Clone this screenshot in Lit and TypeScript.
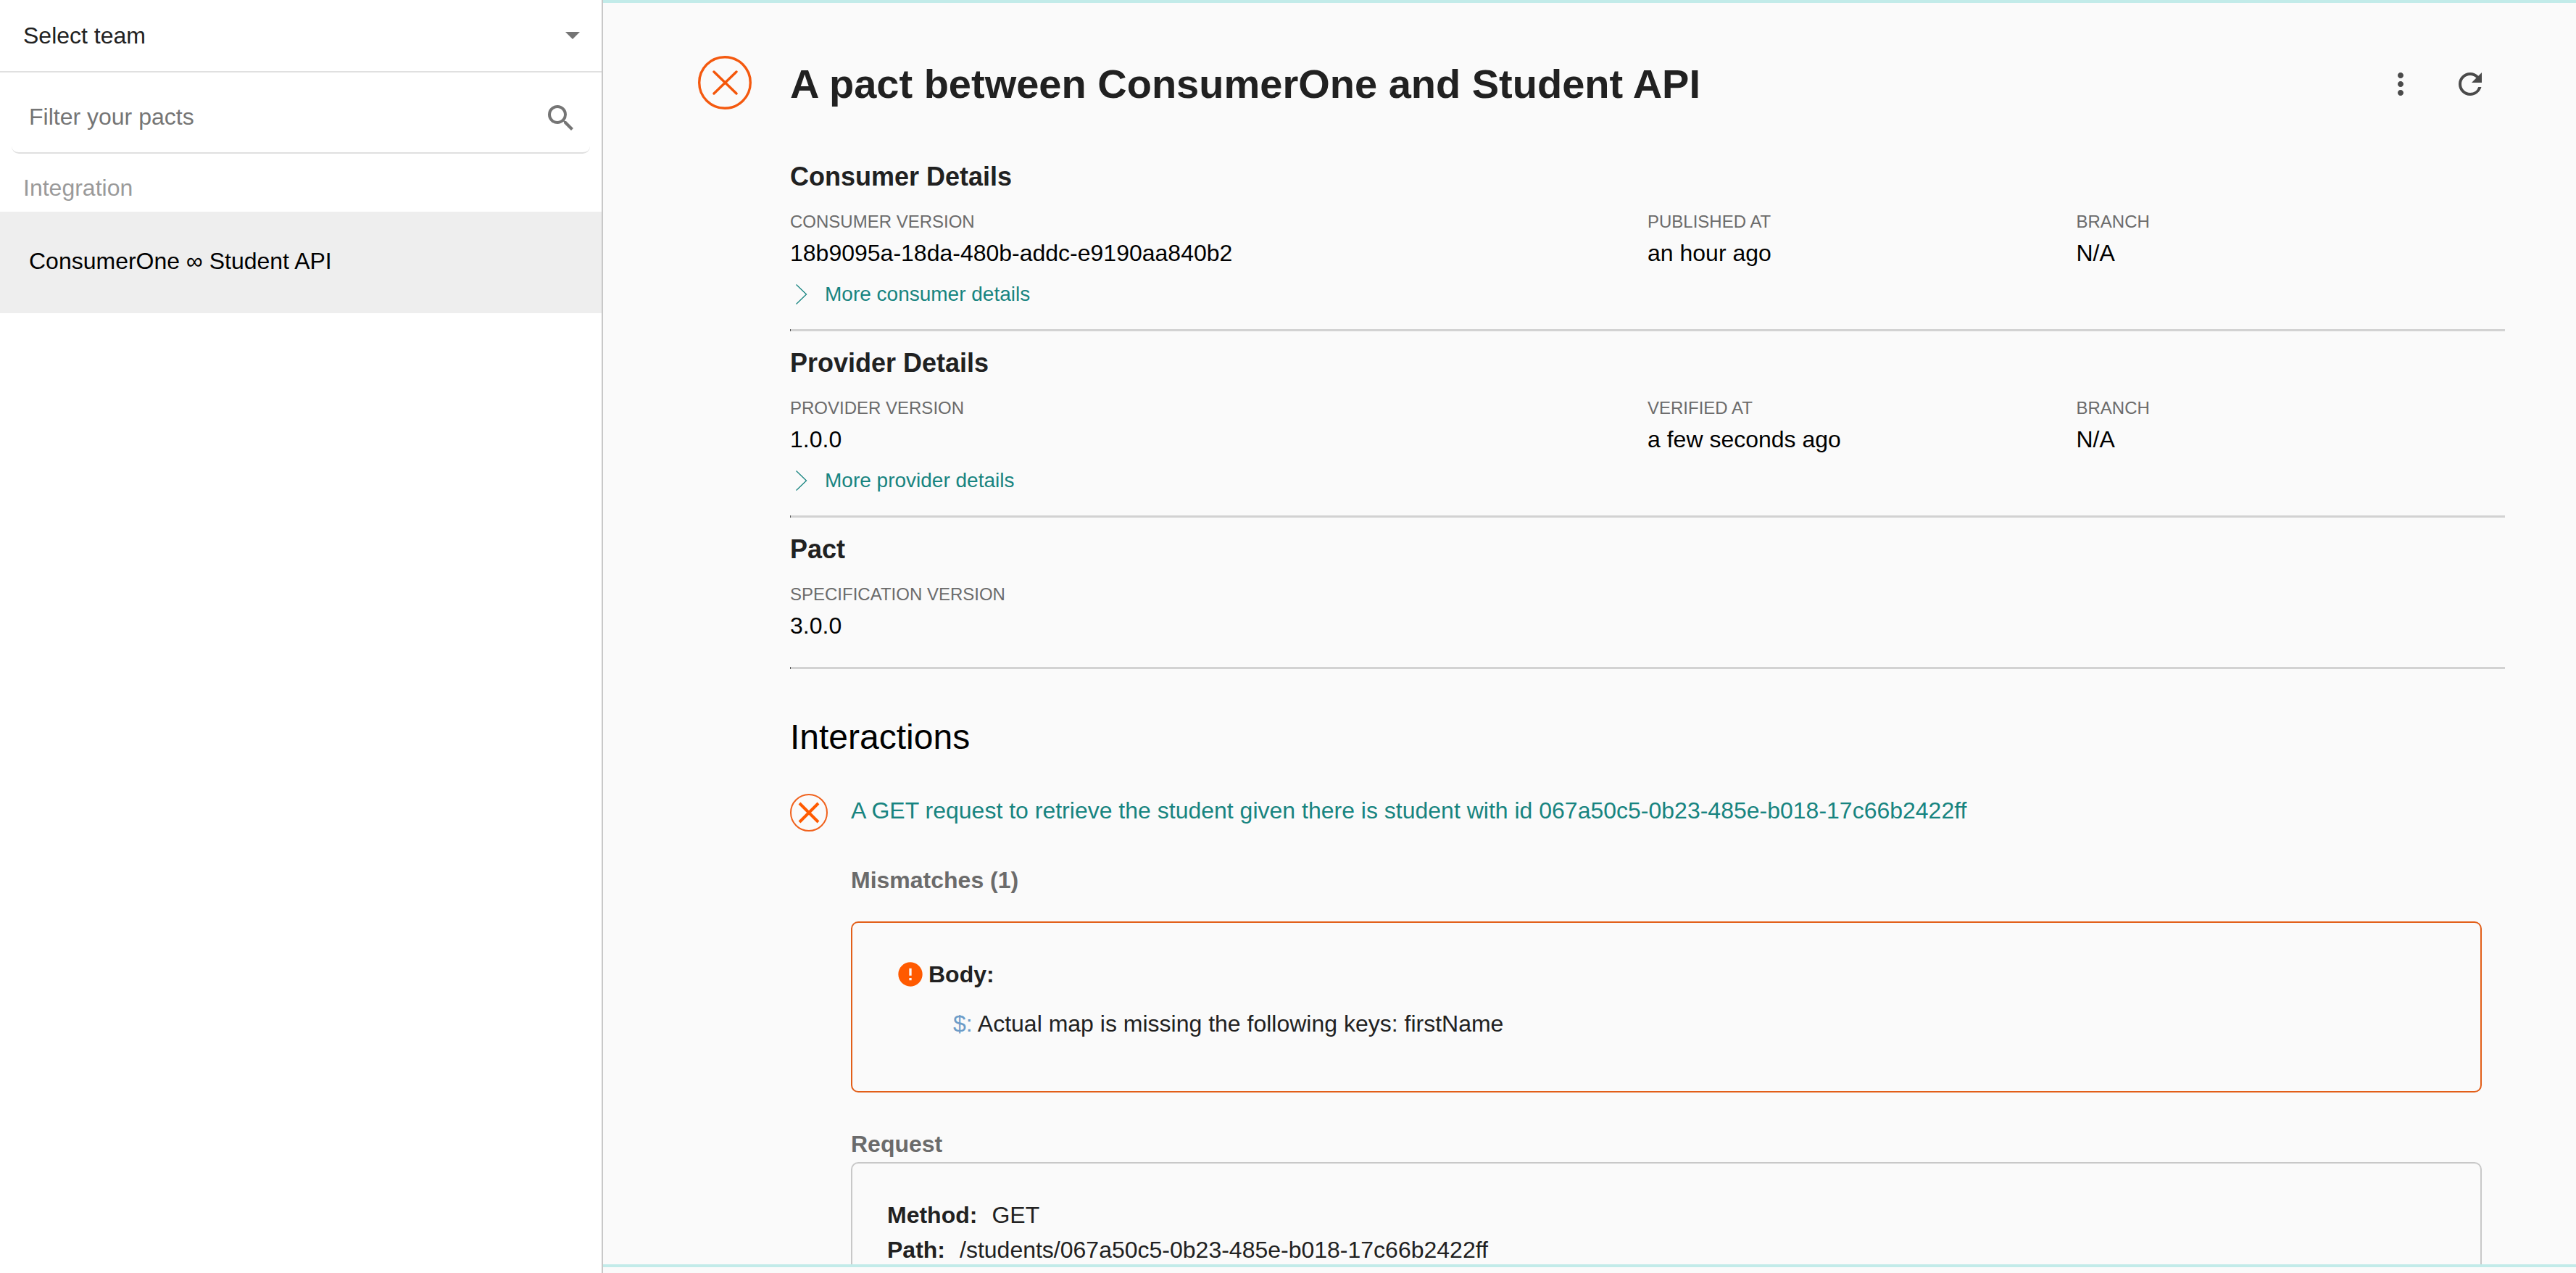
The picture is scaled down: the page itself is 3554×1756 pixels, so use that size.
import { LitElement, html, css, svg, nothing } from "lit";
import { customElement, property } from "lit/decorators.js";

interface Fact {
  label: string;
  value: string;
}

interface Section {
  title: string;
  facts: Fact[];
  more?: string;
}

const sections: Section[] = [
  {
    title: "Consumer Details",
    facts: [
      { label: "CONSUMER VERSION", value: "18b9095a-18da-480b-addc-e9190aa840b2" },
      { label: "PUBLISHED AT", value: "an hour ago" },
      { label: "BRANCH", value: "N/A" },
    ],
    more: "More consumer details",
  },
  {
    title: "Provider Details",
    facts: [
      { label: "PROVIDER VERSION", value: "1.0.0" },
      { label: "VERIFIED AT", value: "a few seconds ago" },
      { label: "BRANCH", value: "N/A" },
    ],
    more: "More provider details",
  },
  {
    title: "Pact",
    facts: [{ label: "SPECIFICATION VERSION", value: "3.0.0" }],
  },
];

const pacts = ["ConsumerOne ∞ Student API"];

/** Material-style glyph on a 24 unit grid. */
const glyph = (className: string, d: string) => html`
  <svg class=${className} viewBox="0 0 24 24" aria-hidden="true">${svg`<path fill="currentColor" d=${d} />`}</svg>
`;

const SEARCH =
  "M15.5 14h-.79l-.28-.27A6.471 6.471 0 0 0 16 9.5 6.5 6.5 0 1 0 9.5 16c1.61 0 3.09-.59 4.23-1.57l.27.28v.79l5 4.99L20.49 19l-4.99-5zm-6 0C7.01 14 5 11.99 5 9.5S7.01 5 9.5 5 14 7.01 14 9.5 11.99 14 9.5 14z";
const MORE =
  "M12 8c1.1 0 2-.9 2-2s-.9-2-2-2-2 .9-2 2 .9 2 2 2zm0 2c-1.1 0-2 .9-2 2s.9 2 2 2 2-.9 2-2-.9-2-2-2zm0 6c-1.1 0-2 .9-2 2s.9 2 2 2 2-.9 2-2-.9-2-2-2z";
const REFRESH =
  "M17.65 6.35A7.958 7.958 0 0 0 12 4c-4.42 0-7.99 3.58-7.99 8s3.57 8 7.99 8c3.73 0 6.84-2.55 7.73-6h-2.08A5.99 5.99 0 0 1 12 18c-3.31 0-6-2.69-6-6s2.69-6 6-6c1.66 0 3.14.69 4.22 1.78L13 11h7V4l-2.35 2.35z";
const ERROR =
  "M12 2C6.48 2 2 6.48 2 12s4.48 10 10 10 10-4.48 10-10S17.52 2 12 2zm1 15h-2v-2h2v2zm0-4h-2V7h2v6z";

@customElement("pact-sidebar")
export class PactSidebar extends LitElement {
  static styles = css`
    :host {
      display: block;
      box-sizing: border-box;
      background: #ffffff;
      border-right: 2px solid #c8c8c8;
      font-family: "Liberation Sans", Arial, sans-serif;
      font-size: 32px;
      color: #212121;
    }
    .team {
      display: grid;
      align-items: center;
      border-bottom: 2px solid #e0e0e0;
    }
    .team-select,
    .caret {
      grid-area: 1 / 1;
    }
    .team-select {
      appearance: none;
      width: 100%;
      height: 98px;
      padding: 0 32px;
      border: 0;
      background: transparent;
      font: inherit;
      color: inherit;
    }
    .caret {
      justify-self: end;
      width: 20px;
      height: 10px;
      margin-right: 30px;
      color: #757575;
      pointer-events: none;
    }
    .filter {
      display: flex;
      align-items: center;
      box-sizing: border-box;
      height: 96px;
      margin: 16px 16px 0;
      padding: 0 16px 0 24px;
      border-bottom: 2px solid #e0e0e0;
      border-radius: 10px;
    }
    .filter-input {
      flex: 1;
      min-width: 0;
      padding: 0 0 4px;
      border: 0;
      outline: 0;
      background: transparent;
      font: inherit;
      color: inherit;
    }
    .filter-input::placeholder {
      color: #757575;
      opacity: 1;
    }
    .search {
      width: 48px;
      height: 48px;
      color: #757575;
    }
    .heading {
      margin: 0;
      padding: 27px 32px 13px;
      font-size: 32px;
      font-weight: 400;
      line-height: 40px;
      color: #9a9a9a;
    }
    .list {
      margin: 0;
      padding: 0;
      list-style: none;
    }
    .item {
      display: block;
      padding: 44px 40px 48px;
      background: #eeeeee;
      line-height: 48px;
      color: #000000;
      text-decoration: none;
    }
  `;

  render() {
    return html`
      <div class="team">
        <select class="team-select" aria-label="Team">
          <option>Select team</option>
        </select>
        <svg class="caret" viewBox="0 0 20 10" aria-hidden="true"><path fill="currentColor" d="M0 0h20L10 10z" /></svg>
      </div>
      <div class="filter">
        <input class="filter-input" type="text" placeholder="Filter your pacts" aria-label="Filter your pacts" />
        ${glyph("search", SEARCH)}
      </div>
      <h2 class="heading">Integration</h2>
      <ul class="list">
        ${pacts.map((name) => html`<li><a class="item" href="#">${name}</a></li>`)}
      </ul>
    `;
  }
}

@customElement("detail-section")
export class DetailSection extends LitElement {
  @property({ attribute: false }) section!: Section;

  static styles = css`
    :host {
      display: block;
    }
    .body {
      padding: 24px 0 28px;
    }
    .body.short {
      padding-bottom: 34px;
    }
    .title {
      margin: 0 0 22px;
      font-size: 36px;
      line-height: 40px;
      color: #212121;
    }
    .facts {
      display: grid;
      grid-template-columns: 2fr 1fr 1fr;
      margin: 0;
    }
    .label {
      font-size: 24px;
      line-height: 40px;
      color: #6b6b6b;
    }
    .value {
      margin: 0;
      font-size: 32px;
      line-height: 46px;
      color: #000000;
    }
    .more {
      display: flex;
      align-items: center;
      margin: 14px 0 0;
      padding: 0;
      border: 0;
      background: none;
      font: inherit;
      font-size: 28px;
      line-height: 40px;
      color: #178480;
      cursor: pointer;
    }
    .chevron {
      width: 48px;
      height: 40px;
    }
    .rule {
      height: 3px;
      margin: 0;
      border: 0;
      background: linear-gradient(to right, #555555 1px, #d2d2d2 1px);
    }
  `;

  render() {
    const { title, facts, more } = this.section;
    return html`
      <div class="body ${more ? "" : "short"}">
        <h2 class="title">${title}</h2>
        <dl class="facts">
          ${facts.map(
            (fact) => html`
              <div>
                <dt class="label">${fact.label}</dt>
                <dd class="value">${fact.value}</dd>
              </div>
            `
          )}
        </dl>
        ${more
          ? html`
              <button class="more" type="button">
                <svg class="chevron" viewBox="0 0 48 40" aria-hidden="true">
                  <path d="M8.500 6.500L22.500 20L8.500 33.500" fill="none" stroke="currentColor" stroke-width="1.300" />
                </svg>
                ${more}
              </button>
            `
          : nothing}
      </div>
      <hr class="rule" />
    `;
  }
}

@customElement("pact-interaction")
export class PactInteraction extends LitElement {
  static styles = css`
    :host {
      display: block;
      font-size: 32px;
      color: #212121;
    }
    .summary {
      display: flex;
      align-items: flex-start;
      gap: 32px;
    }
    .status {
      flex: none;
      width: 52px;
      height: 54px;
    }
    .link {
      line-height: 48px;
      color: #178480;
      text-decoration: none;
    }
    .content {
      margin: 0 32px 0 84px;
    }
    .subtitle {
      margin: 0;
      font-size: 32px;
      line-height: 40px;
      color: #6b6b6b;
    }
    .mismatches-title {
      padding: 46px 0 37px;
    }
    .request-title {
      padding: 51px 0 5px;
    }
    .card {
      border: 2px solid #c8c8c8;
      border-radius: 10px;
    }
    .mismatches {
      padding: 51px 60px 73px;
      border-color: #e25e18;
    }
    .kind {
      display: flex;
      align-items: center;
      gap: 5px;
      margin: 0;
      font-size: 32px;
      line-height: 40px;
    }
    .error {
      width: 40px;
      height: 40px;
      color: #ff5a00;
    }
    .message {
      margin: 28px 0 0;
      padding-left: 79px;
      line-height: 40px;
    }
    .path {
      color: #6c9cc8;
    }
    .request {
      margin: 0;
      padding: 47px 48px;
    }
    .entry {
      display: flex;
      gap: 20px;
      line-height: 48px;
    }
    .name {
      font-weight: 700;
    }
    .text {
      margin: 0;
    }
  `;

  render() {
    return html`
      <div class="summary">
        <svg class="status" viewBox="0 0 52 54" role="img" aria-label="Failed">
          <circle cx="26" cy="27" r="25" fill="none" stroke="#f0611c" stroke-width="2" />
          <path d="M13 14L39 40M39 14L13 40" stroke="#ff5a00" stroke-width="4" />
        </svg>
        <a class="link" href="#"
          >A GET request to retrieve the student given there is student with id 067a50c5-0b23-485e-b018-17c66b2422ff</a
        >
      </div>
      <div class="content">
        <h3 class="subtitle mismatches-title">Mismatches (1)</h3>
        <div class="card mismatches">
          <h4 class="kind">${glyph("error", ERROR)} Body:</h4>
          <p class="message"><span class="path">$:</span> Actual map is missing the following keys: firstName</p>
        </div>
        <h3 class="subtitle request-title">Request</h3>
        <dl class="card request">
          <div class="entry">
            <dt class="name">Method:</dt>
            <dd class="text">GET</dd>
          </div>
          <div class="entry">
            <dt class="name">Path:</dt>
            <dd class="text">/students/067a50c5-0b23-485e-b018-17c66b2422ff</dd>
          </div>
        </dl>
      </div>
    `;
  }
}

@customElement("app-root")
export class AppRoot extends LitElement {
  static styles = css`
    :host {
      display: grid;
      grid-template-columns: 832px minmax(0, 1fr);
      height: 100vh;
      font-family: "Liberation Sans", Arial, sans-serif;
      background: #fafafa;
    }
    .pane {
      box-sizing: border-box;
      min-height: 0;
      margin-bottom: 8px;
      padding: 64px 98px 0 128px;
      border-top: 4px solid #c2ebe9;
      border-bottom: 4px solid #c2ebe9;
      overflow-y: auto;
      scrollbar-width: none;
    }
    .header {
      display: flex;
      align-items: center;
      height: 96px;
      margin-bottom: 36px;
    }
    .status {
      flex: none;
      width: 80px;
      height: 80px;
      margin-right: 50px;
    }
    .title {
      flex: 1;
      margin: 0;
      font-size: 56px;
      line-height: 72px;
      color: #212121;
    }
    .action {
      display: grid;
      place-items: center;
      width: 96px;
      height: 96px;
      padding: 0;
      border: 0;
      background: none;
      color: #4a4a4a;
      cursor: pointer;
    }
    .action-icon {
      width: 48px;
      height: 48px;
    }
    .details {
      padding-left: 130px;
    }
    .interactions-title {
      margin: 64px 0 47px;
      font-size: 48px;
      font-weight: 400;
      line-height: 60px;
      color: #000000;
    }
  `;

  render() {
    return html`
      <pact-sidebar></pact-sidebar>
      <main class="pane">
        <header class="header">
          <svg class="status" viewBox="0 0 80 80" role="img" aria-label="Failed">
            <circle cx="40" cy="38" r="35.300" fill="none" stroke="#f4590f" stroke-width="3.400" />
            <path d="M25 23L56 53M56 23L25 53" stroke="#f4560a" stroke-width="3.400" stroke-linecap="round" />
          </svg>
          <h1 class="title">A pact between ConsumerOne and Student API</h1>
          <button class="action" type="button" aria-label="More actions">${glyph("action-icon", MORE)}</button>
          <button class="action" type="button" aria-label="Refresh">${glyph("action-icon", REFRESH)}</button>
        </header>
        <div class="details">
          ${sections.map((section) => html`<detail-section .section=${section}></detail-section>`)}
          <h2 class="interactions-title">Interactions</h2>
          <pact-interaction></pact-interaction>
        </div>
      </main>
    `;
  }
}
